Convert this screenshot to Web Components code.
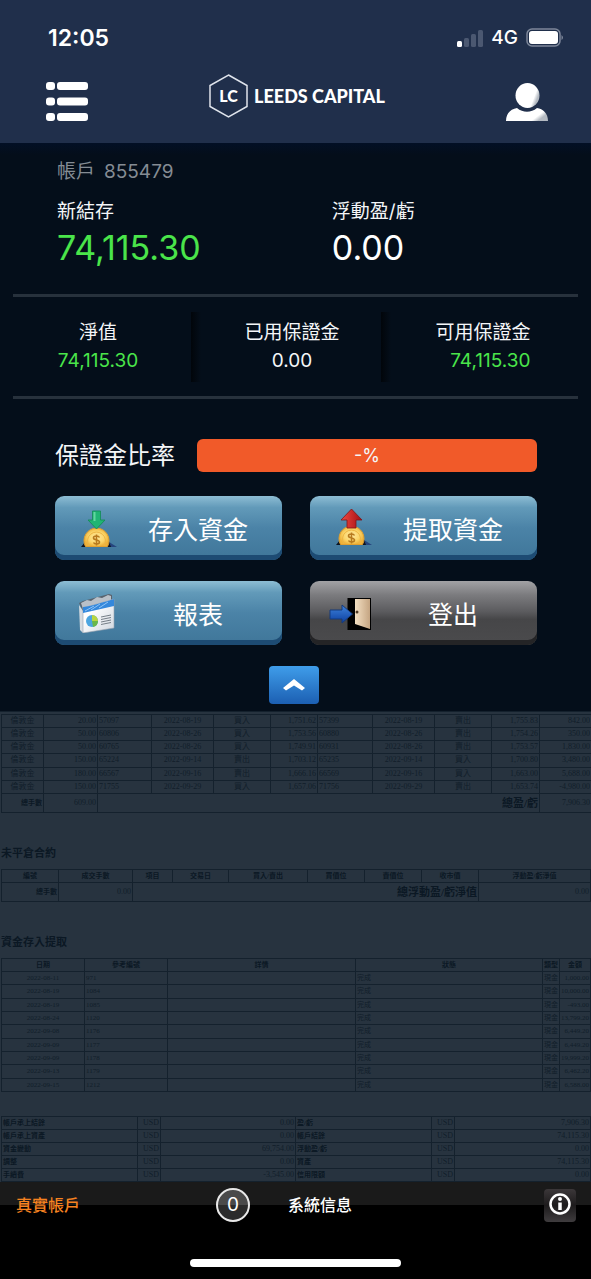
<!DOCTYPE html>
<html lang="zh-Hant">
<head>
<meta charset="UTF-8">
<meta name="viewport" content="width=device-width, initial-scale=1">
<title>Leeds Capital</title>
<style>
  :root {
    --header-bg: #202f4b;
    --panel-bg: #040e1a;
    --rule: #27313c;
    --gain: #4ae54a;
    --accent: #f15a29;
    --sheet: #27333f;
    --sheet-ink: #0b1824;
  }
  body {
    margin: 0;
    background: #000;
    color: #f4f6f8;
    font-family: Inter, "Noto Sans CJK TC", sans-serif;
  }
</style>
</head>
<body>
<trading-app>
  <app-header slot="header" time="12:05" network="4G"></app-header>

  <account-summary account="855479">
    <balance-item label="新結存" value="74,115.30" gain></balance-item>
    <balance-item label="浮動盈/虧" value="0.00"></balance-item>
  </account-summary>

  <metric-row>
    <metric-item label="淨值" value="74,115.30" gain></metric-item>
    <metric-item label="已用保證金" value="0.00"></metric-item>
    <metric-item label="可用保證金" value="74,115.30" gain align="end"></metric-item>
  </metric-row>

  <margin-ratio label="保證金比率" value="-%"></margin-ratio>

  <action-grid>
    <action-button label="存入資金">
      <svg slot="icon" width="44" height="44" viewBox="0 0 44 44" aria-hidden="true">
        <defs><radialGradient id="coin"><stop offset="0" stop-color="#ffe9a0"/><stop offset=".65" stop-color="#fbd568"/><stop offset="1" stop-color="#eeb23a"/></radialGradient></defs>
        <path d="M8 43l4-5h24l5 5z" fill="#0d1420"/><path d="M36 38l8 5h-6z" fill="#26457e"/>
        <path d="M12.500 42.500a12.500 12.500 0 1 1 22 0z" fill="url(#coin)" stroke="#e0a030"/><path d="M16 42a9 9 0 1 1 15 0" fill="none" stroke="#edb545"/>
        <path d="M26.500 33.500c-1-2-6-2-6 .5s6 1.500 6 4-5 2.500-6 .5M23.500 30.500v11" fill="none" stroke="#b77a1e" stroke-width="1.600"/>
        <path d="M19.500 7h8v9H32l-8.500 9L15 16h4.500z" fill="#21b573" stroke="#138a55" stroke-width=".8"/><path d="M20.500 8h2v9h-2z" fill="#62d6a0"/>
      </svg>
    </action-button>
    <action-button label="提取資金">
      <svg slot="icon" width="44" height="44" viewBox="0 0 44 44" aria-hidden="true">
        <defs><radialGradient id="coin2"><stop offset="0" stop-color="#ffe9a0"/><stop offset=".65" stop-color="#fbd568"/><stop offset="1" stop-color="#eeb23a"/></radialGradient><linearGradient id="red"><stop offset="0" stop-color="#f04a42"/><stop offset="1" stop-color="#a30d12"/></linearGradient></defs>
        <path d="M8 41l4-5h24l5 5z" fill="#0d1420"/><path d="M36 36l8 5h-6z" fill="#26457e"/>
        <path d="M12.500 40.500a12.500 12.500 0 1 1 22 0z" fill="url(#coin2)" stroke="#e0a030"/><path d="M16 40a9 9 0 1 1 15 0" fill="none" stroke="#edb545"/>
        <path d="M26.500 31.500c-1-2-6-2-6 .5s6 1.500 6 4-5 2.500-6 .5M23.500 28.500v11" fill="none" stroke="#b77a1e" stroke-width="1.600"/>
        <path d="M23.500 5L34 16h-6v8h-9v-8h-6z" fill="url(#red)" stroke="#7d1519" stroke-width=".8"/>
      </svg>
    </action-button>
    <action-button label="報表">
      <svg slot="icon" width="44" height="44" viewBox="0 0 44 44" aria-hidden="true">
        <defs><linearGradient id="page" x2="1" y2="1"><stop offset=".3" stop-color="#fff"/><stop offset="1" stop-color="#cfd6df"/></linearGradient></defs>
        <path d="M6 14l4-2 26-7 3 1v8L10 22z" fill="#59636e"/><path d="M8 14l6-3 4 1 6-4 5 1 6-3 3 1v5L10 20z" fill="#b9c0c8"/>
        <path d="M6 16l4 6v22l-3-3z" fill="#d6dbe0"/>
        <path d="M10 19l31-9v29l-31 5z" fill="url(#page)" stroke="#98a3ae" stroke-width=".6"/>
        <path d="M10 18c10-1 20-5 31-8v7l-31 7z" fill="#3488dc"/><path d="M12 22l9-5M18 21l9-6M26 19l9-6" fill="none" stroke="#8fc4f7"/>
        <circle cx="19" cy="32" r="6" fill="#4ca5e0"/><path d="M19 32v-6a6 6 0 0 1 6 6z" fill="#b9d640"/><path d="M19 32h6a6 6 0 0 1-5 6z" fill="#6ab84a"/>
        <path d="M28 28l10-2M28 30.500l10-2M28 33l10-2M28 35.500l10-2" stroke="#59636d" stroke-width=".8"/>
      </svg>
    </action-button>
    <action-button label="登出" tone="dark">
      <svg slot="icon" width="44" height="44" viewBox="0 0 44 44" aria-hidden="true">
        <defs><linearGradient id="door"><stop offset="0" stop-color="#f3dfc2"/><stop offset="1" stop-color="#c5a582"/></linearGradient><linearGradient id="blue" x2="0" y2="1"><stop offset="0" stop-color="#3f83dc"/><stop offset="1" stop-color="#0c3fa0"/></linearGradient></defs>
        <path d="M19.500 9H43v32H19.500z" fill="#000"/><path d="M27 10h15v30L27 35z" fill="url(#door)"/><circle cx="29" cy="23" r="1.500" fill="#4c3824"/>
        <path d="M2 21h12v-5l10.500 9L14 34v-4H2z" fill="url(#blue)" stroke="#153a7c"/>
      </svg>
    </action-button>
  </action-grid>

  <collapse-toggle></collapse-toggle>
  <account-statement slot="report"></account-statement>
  <app-footer slot="footer" account-type="真實帳戶" count="0" message="系統信息"></app-footer>
</trading-app>

<script>
// Shared helper: attach an open root and fill it
function render(el, html) {
  el.attachShadow({ mode: 'open' }).innerHTML = html;
}

// Page frame
class TradingApp extends HTMLElement {
  connectedCallback() {
    render(this, `
      <style>
        :host { display: flex; flex-direction: column; min-height: 100vh; }
        main { background: linear-gradient(#020f25, var(--panel-bg) 12px); padding-bottom: 7px; }
      </style>
      <slot name="header"></slot>
      <main><slot></slot></main>
      <slot name="report"></slot>
      <slot name="footer"></slot>
    `);
  }
}

class AppHeader extends HTMLElement {
  connectedCallback() {
    render(this, `
      <style>
        :host { display: block; background: var(--header-bg); color: #fff; }
        .status { display: flex; align-items: center; justify-content: space-between; padding: 24px 28px 0 48px; line-height: 28px; }
        .time { font-size: 23px; font-weight: 600; }
        .signal { display: flex; align-items: center; gap: 8px; font-size: 19px; font-weight: 500; }
        nav { display: flex; align-items: center; justify-content: space-between; padding: 22px 42px 15px 46px; }
        button { display: block; padding: 0; border: 0; background: none; cursor: pointer; }
        svg { display: block; }
        .logo { display: flex; align-items: center; gap: 6px; padding-bottom: 10px; color: #fff; text-decoration: none; font-family: Lato, sans-serif; font-size: 18px; font-weight: 900; white-space: nowrap; }
        .hex { display: grid; place-items: center; font-size: 16px; line-height: 44px; }
        .hex > * { grid-area: 1 / 1; }
      </style>
      <div class="status">
        <span class="time">${this.getAttribute('time')}</span>
        <span class="signal">
          <svg width="26" height="18" viewBox="0 0 26 18" aria-hidden="true">
            <rect y="12" width="5" height="6" rx="1.500" fill="#fff"/>
            <g fill="#4b5871"><rect x="7" y="9" width="5" height="9" rx="1.500"/><rect x="14" y="5" width="5" height="13" rx="1.500"/><rect x="21" y="1" width="5" height="17" rx="1.500"/></g>
          </svg>
          ${this.getAttribute('network')}
          <svg width="37" height="20" viewBox="0 0 37 20" aria-hidden="true">
            <rect x="1" y="1" width="33" height="17" rx="5" fill="none" stroke="#7d879a" stroke-width="1.500"/>
            <rect x="3" y="3" width="29" height="13" rx="3" fill="#fff"/><path d="M35.500 7v5q1.500-1 1.500-2.500T35.500 7" fill="#7d879a"/>
          </svg>
        </span>
      </div>
      <nav>
        <button type="button" aria-label="選單">
          <svg width="43" height="40" viewBox="0 0 43 40" fill="#fff">
            <rect y="1" width="9" height="8" rx="3"/><rect x="11" y="1" width="31" height="8" rx="3"/>
            <rect y="16.500" width="9" height="8" rx="3"/><rect x="11" y="16.500" width="31" height="8" rx="3"/>
            <rect y="32" width="9" height="8" rx="3"/><rect x="11" y="32" width="31" height="8" rx="3"/>
          </svg>
        </button>
        <a class="logo" href="#">
          <span class="hex">
            <svg width="39" height="44" viewBox="0 0 39 44" fill="none" stroke="#dfe4ec" stroke-width="1.500"><path d="M19.500 1L38 11.500v21L19.500 43 1 32.500v-21z"/></svg>
            <span>LC</span>
          </span>
          <span>LEEDS CAPITAL</span>
        </a>
        <button type="button" aria-label="用戶">
          <svg width="44" height="40" viewBox="0 0 44 40">
            <defs><linearGradient id="u" x2="1" y2=".4"><stop offset=".86" stop-color="#fff"/><stop offset="1" stop-color="#b4bac2"/></linearGradient></defs>
            <path d="M1 40c0-8 5-12 11-13 6 5 14 5 20 0 6 1 11 5 11 13z" fill="url(#u)"/>
            <ellipse cx="22.500" cy="14.500" rx="12" ry="12.500" fill="url(#u)"/>
          </svg>
        </button>
      </nav>
    `);
  }
}

class AccountSummary extends HTMLElement {
  connectedCallback() {
    render(this, `
      <style>
        :host { display: block; padding: 17px 53px 26px 57px; }
        .account { display: flex; gap: 9px; color: #858c94; font-size: 19px; line-height: 24px; }
        .items { display: grid; grid-template-columns: 4fr 3fr; margin-top: 16px; }
      </style>
      <div class="account"><span>帳戶</span><span>${this.getAttribute('account')}</span></div>
      <div class="items"><slot></slot></div>
    `);
  }
}

class BalanceItem extends HTMLElement {
  connectedCallback() {
    render(this, `
      <style>
        :host { display: block; }
        .label { font-size: 19px; line-height: 24px; }
        .value { margin-top: 3px; font-size: 34px; line-height: 41px; color: #fff; }
        :host([gain]) .value { color: var(--gain); }
      </style>
      <div class="label">${this.getAttribute('label')}</div>
      <div class="value">${this.getAttribute('value')}</div>
    `);
  }
}

class MetricRow extends HTMLElement {
  connectedCallback() {
    render(this, `
      <style>
        :host { display: block; margin: 0 13px; border: solid var(--rule); border-width: 3px 0; }
        .cols { display: grid; grid-template-columns: 178fr 190fr 192fr; padding: 15px 5px 14px 0; }
        ::slotted(metric-item:not(:first-child)) { background: linear-gradient(90deg, #01050a, transparent) no-repeat left / 10px 100%; }
      </style>
      <div class="cols"><slot></slot></div>
    `);
  }
}

class MetricItem extends HTMLElement {
  connectedCallback() {
    render(this, `
      <style>
        :host { display: flex; justify-content: center; padding: 9px 0 9px 12px; }
        .pair { display: flex; flex-direction: column; align-items: center; gap: 4px; font-size: 19px; line-height: 24px; }
        :host(:first-child) { padding-left: 0; padding-right: 8px; }
        :host([align="end"]) .value { align-self: flex-end; }
        :host([gain]) .value { color: var(--gain); }
      </style>
      <div class="pair">
        <span>${this.getAttribute('label')}</span>
        <span class="value">${this.getAttribute('value')}</span>
      </div>
    `);
  }
}

class MarginRatio extends HTMLElement {
  connectedCallback() {
    render(this, `
      <style>
        :host { display: flex; align-items: center; gap: 22px; margin: 40px 54px 24px 55px; }
        #label { font-size: 24px; line-height: 33px; white-space: nowrap; }
        .bar { flex: 1; border-radius: 6px; background: var(--accent); font-size: 18px; line-height: 33px; text-align: center; }
      </style>
      <span id="label">${this.getAttribute('label')}</span>
      <div class="bar" role="status" aria-labelledby="label">${this.getAttribute('value')}</div>
    `);
  }
}

class ActionGrid extends HTMLElement {
  connectedCallback() {
    render(this, `
      <style>
        :host { display: grid; grid-template-columns: 1fr 1fr; gap: 21px 28px; margin: 0 54px 0 55px; }
      </style>
      <slot></slot>
    `);
  }
}

class ActionButton extends HTMLElement {
  connectedCallback() {
    render(this, `
      <style>
        :host { display: block; --face: linear-gradient(#8dbdd4, #629ab9 18%, #4b83a7 50%, #3f7699); --edge: #1d4b73; }
        :host([tone="dark"]) { --face: linear-gradient(#a2a2a5, #7b7b7e 22%, #5b5b5e 48%, #464648 60%, #4b4b4d); --edge: #242426; }
        button { display: flex; align-items: center; width: 100%; height: 64px; padding: 0 3px 5px 18px; border: 0; border-radius: 9px; background: var(--face); box-shadow: inset 0 -5px 0 var(--edge); color: #fff; font: inherit; font-size: 25px; cursor: pointer; }
        .label { flex: 1; padding-top: 4px; }
      </style>
      <button type="button"><slot name="icon"></slot><span class="label">${this.getAttribute('label')}</span></button>
    `);
  }
}

class CollapseToggle extends HTMLElement {
  connectedCallback() {
    render(this, `
      <style>
        :host { display: flex; justify-content: center; padding: 21px 4px 0 0; }
        button { display: grid; place-items: center; width: 50px; height: 38px; padding: 0; border: 0; border-radius: 4px; background: linear-gradient(#3f9dea, #1c5fb2); cursor: pointer; }
      </style>
      <button type="button" aria-label="收起">
        <svg width="24" height="14" viewBox="0 0 24 14"><path d="M12 1l11 9-3 2.500-8-5-8 5L1 10z" fill="#fff"/></svg>
      </button>
    `);
  }
}

// Daily statement sheet; cell classes: c = centre, r = right, l = left
const trades = [
  ['20.00', '57097', '2022-08-19', '買入', '1,751.62', '57399', '2022-08-19', '賣出', '1,755.83', '842.00'],
  ['50.00', '60806', '2022-08-26', '買入', '1,753.56', '60880', '2022-08-26', '賣出', '1,754.26', '350.00'],
  ['50.00', '60765', '2022-08-26', '買入', '1,749.91', '60931', '2022-08-26', '賣出', '1,753.57', '1,830.00'],
  ['150.00', '65224', '2022-09-14', '賣出', '1,703.12', '65235', '2022-09-14', '買入', '1,700.80', '3,480.00'],
  ['180.00', '66567', '2022-09-16', '賣出', '1,666.16', '66569', '2022-09-16', '買入', '1,663.00', '5,688.00'],
  ['150.00', '71755', '2022-09-29', '買入', '1,657.06', '71756', '2022-09-29', '賣出', '1,653.74', '-4,980.00']
];
const transfers = [
  ['2022-08-11', '971', '1,000.00'],
  ['2022-08-19', '1084', '10,000.00'],
  ['2022-08-19', '1085', '-493.00'],
  ['2022-08-24', '1120', '13,799.20'],
  ['2022-09-08', '1176', '6,449.20'],
  ['2022-09-09', '1177', '6,449.20'],
  ['2022-09-09', '1178', '19,999.20'],
  ['2022-09-13', '1179', '6,462.20'],
  ['2022-09-15', '1212', '6,588.00']
];
const totals = [
  ['帳戶承上結餘', '0.00', '盈/虧', '7,906.30'],
  ['帳戶承上資產', '0.00', '帳戶結餘', '74,115.30'],
  ['資金變動', '69,754.00', '浮動盈/虧', '0.00'],
  ['調整', '0.00', '資產', '74,115.30'],
  ['手續費', '-3,545.00', '信用限額', '0.00']
];

const cols = (widths) => `<colgroup>${widths.map((w) => `<col style="width:${w}px">`).join('')}</colgroup>`;
const cells = (values, align) => values.map((v, i) => `<td class="${align[i]}">${v}</td>`).join('');
const heads = (names) => `<thead><tr>${names.map((n) => `<th scope="col">${n}</th>`).join('')}</tr></thead>`;

class AccountStatement extends HTMLElement {
  connectedCallback() {
    render(this, `
      <style>
        :host { display: block; padding: 2px 0 0 1px; border-top: 1px solid #14212d; background: var(--sheet); color: var(--sheet-ink); font-family: "Liberation Serif", "Noto Sans CJK TC", serif; }
        table { width: 100%; table-layout: fixed; border-collapse: collapse; font-size: 8px; line-height: 8px; }
        td, th { height: 12px; padding: 0 1px; border: 1px solid #14212d; white-space: nowrap; }
        td { color: #111e2a; }
        .c { text-align: center; }
        .r { text-align: right; }
        .l { text-align: left; }
        .b { font-weight: 700; color: var(--sheet-ink); }
        th, .b { font-size: 7px; }
        .sum td { height: 18px; }
        .sum .big, h2 { font-size: 11px; font-weight: 700; color: var(--sheet-ink); }
        h2 { margin: 0; padding: 31px 0 7px; line-height: 18px; }
        .trades { height: 99px; }
        .transfers { height: 134px; font-size: 7px; }
        .totals { height: 66px; margin-top: 24px; }
      </style>
      <table class="trades">
        ${cols([42, 54, 54, 62, 57, 47, 55, 62, 57, 48, 52])}
        ${trades.map((t) => `<tr>${cells(['倫敦金', ...t], 'crlccrlccrr')}</tr>`).join('')}
        <tr class="sum"><td class="r b">總手數</td><td class="r">609.00</td><td colspan="8" class="r big">總盈/虧</td><td class="r">7,906.30</td></tr>
      </table>
      <h2>未平倉合約</h2>
      <table>
        ${cols([57, 74, 40, 56, 79, 57, 57, 57, 112])}
        ${heads(['編號', '成交手數', '項目', '交易日', '買入/賣出', '買價位', '賣價位', '收市價', '浮動盈/虧淨值'])}
        <tr class="sum"><td class="r b">總手數</td><td class="r">0.00</td><td colspan="6" class="r big">總浮動盈/虧淨值</td><td class="r">0.00</td></tr>
      </table>
      <h2>資金存入提取</h2>
      <table class="transfers">
        ${cols([83, 83, 188, 187, 17, 31])}
        ${heads(['日期', '參考編號', '詳情', '狀態', '類型', '金額'])}
        ${transfers.map(([date, ref, sum]) => `<tr>${cells([date, ref, '', '完成', '現金', sum], 'cllllr')}</tr>`).join('')}
      </table>
      <table class="totals">
        ${cols([136, 23, 135, 136, 23, 136])}
        ${totals.map(([a, x, b, y]) => `<tr><td class="b">${a}</td><td class="r">USD</td><td class="r">${x}</td><td class="b">${b}</td><td class="r">USD</td><td class="r">${y}</td></tr>`).join('')}
      </table>
    `);
  }
}

class AppFooter extends HTMLElement {
  connectedCallback() {
    render(this, `
      <style>
        :host { display: block; flex: 1; background: linear-gradient(#1a1a1a 23px, #000 23px); color: #fff; font-size: 16px; font-weight: 500; }
        .bar { display: grid; grid-template-columns: 200fr 328fr 32px; align-items: center; padding: 6px 15px 0 16px; line-height: 34px; }
        .type { color: #f58220; }
        .info { display: flex; align-items: center; gap: 38px; }
        .count { box-sizing: border-box; width: 34px; height: 34px; border: 2px solid #e8e8e8; border-radius: 50%; background: linear-gradient(#4a4a4a 50%, #2b2b2b 50%); font-size: 19px; font-weight: 400; line-height: 30px; text-align: center; }
        button { display: grid; place-items: center; width: 32px; height: 33px; padding: 0 0 3px; border: 0; border-radius: 4px; background: linear-gradient(#3b3739, #1d1b1c 50%, #3f3c3e); cursor: pointer; }
        .home { width: 211px; height: 8px; margin: 37px auto 12px; border-radius: 4px; background: #fff; }
      </style>
      <div class="bar">
        <span class="type">${this.getAttribute('account-type')}</span>
        <span class="info"><span class="count">${this.getAttribute('count')}</span>${this.getAttribute('message')}</span>
        <button type="button" aria-label="資訊">
          <svg width="22" height="24" viewBox="0 0 22 24" fill="none" stroke="#fff">
            <circle cx="11" cy="12" r="9.500" stroke-width="2.500"/><path d="M11 10.500V18" stroke-width="3.500"/><circle cx="11" cy="7" r="2" fill="#fff" stroke="none"/>
          </svg>
        </button>
      </div>
      <div class="home"></div>
    `);
  }
}

customElements.define('trading-app', TradingApp);
customElements.define('app-header', AppHeader);
customElements.define('account-summary', AccountSummary);
customElements.define('balance-item', BalanceItem);
customElements.define('metric-row', MetricRow);
customElements.define('metric-item', MetricItem);
customElements.define('margin-ratio', MarginRatio);
customElements.define('action-grid', ActionGrid);
customElements.define('action-button', ActionButton);
customElements.define('collapse-toggle', CollapseToggle);
customElements.define('account-statement', AccountStatement);
customElements.define('app-footer', AppFooter);
</script>
</body>
</html>
